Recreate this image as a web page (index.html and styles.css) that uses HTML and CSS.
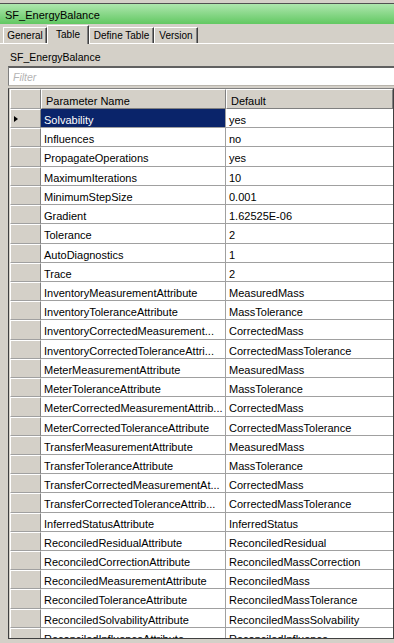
FILE: index.html
```html
<!DOCTYPE html>
<html lang="en">
<head>
    <meta charset="UTF-8">
    <meta name="viewport" content="width=device-width, initial-scale=1.0">
    <title>SF_EnergyBalance</title>
    <link rel="stylesheet" href="styles.css">
</head>
<body>
    <div class="window">
        <div class="titlebar">SF_EnergyBalance</div>

        <div class="tabs">
            <div class="tab tab-general">General</div>
            <div class="tab tab-table active">Table</div>
            <div class="tab tab-define">Define Table</div>
            <div class="tab tab-version">Version</div>
        </div>

        <div class="panel">
            <div class="caption">SF_EnergyBalance</div>
            <div class="filter"><span class="placeholder">Filter</span></div>

            <div class="grid">
                <div class="row head">
                    <div class="rh"></div>
                    <div class="c1">Parameter Name</div>
                    <div class="c2">Default</div>
                </div>
                <div class="row current">
                    <div class="rh"><span class="arrow"></span></div>
                    <div class="c1 selected">Solvability</div>
                    <div class="c2">yes</div>
                </div>
                <div class="row"><div class="rh"></div><div class="c1">Influences</div><div class="c2">no</div></div>
                <div class="row"><div class="rh"></div><div class="c1">PropagateOperations</div><div class="c2">yes</div></div>
                <div class="row"><div class="rh"></div><div class="c1">MaximumIterations</div><div class="c2">10</div></div>
                <div class="row"><div class="rh"></div><div class="c1">MinimumStepSize</div><div class="c2">0.001</div></div>
                <div class="row"><div class="rh"></div><div class="c1">Gradient</div><div class="c2">1.62525E-06</div></div>
                <div class="row"><div class="rh"></div><div class="c1">Tolerance</div><div class="c2">2</div></div>
                <div class="row"><div class="rh"></div><div class="c1">AutoDiagnostics</div><div class="c2">1</div></div>
                <div class="row"><div class="rh"></div><div class="c1">Trace</div><div class="c2">2</div></div>
                <div class="row"><div class="rh"></div><div class="c1">InventoryMeasurementAttribute</div><div class="c2">MeasuredMass</div></div>
                <div class="row"><div class="rh"></div><div class="c1">InventoryToleranceAttribute</div><div class="c2">MassTolerance</div></div>
                <div class="row"><div class="rh"></div><div class="c1">InventoryCorrectedMeasurement...</div><div class="c2">CorrectedMass</div></div>
                <div class="row"><div class="rh"></div><div class="c1">InventoryCorrectedToleranceAttri...</div><div class="c2">CorrectedMassTolerance</div></div>
                <div class="row"><div class="rh"></div><div class="c1">MeterMeasurementAttribute</div><div class="c2">MeasuredMass</div></div>
                <div class="row"><div class="rh"></div><div class="c1">MeterToleranceAttribute</div><div class="c2">MassTolerance</div></div>
                <div class="row"><div class="rh"></div><div class="c1">MeterCorrectedMeasurementAttrib...</div><div class="c2">CorrectedMass</div></div>
                <div class="row"><div class="rh"></div><div class="c1">MeterCorrectedToleranceAttribute</div><div class="c2">CorrectedMassTolerance</div></div>
                <div class="row"><div class="rh"></div><div class="c1">TransferMeasurementAttribute</div><div class="c2">MeasuredMass</div></div>
                <div class="row"><div class="rh"></div><div class="c1">TransferToleranceAttribute</div><div class="c2">MassTolerance</div></div>
                <div class="row"><div class="rh"></div><div class="c1">TransferCorrectedMeasurementAt...</div><div class="c2">CorrectedMass</div></div>
                <div class="row"><div class="rh"></div><div class="c1">TransferCorrectedToleranceAttrib...</div><div class="c2">CorrectedMassTolerance</div></div>
                <div class="row"><div class="rh"></div><div class="c1">InferredStatusAttribute</div><div class="c2">InferredStatus</div></div>
                <div class="row"><div class="rh"></div><div class="c1">ReconciledResidualAttribute</div><div class="c2">ReconciledResidual</div></div>
                <div class="row"><div class="rh"></div><div class="c1">ReconciledCorrectionAttribute</div><div class="c2">ReconciledMassCorrection</div></div>
                <div class="row"><div class="rh"></div><div class="c1">ReconciledMeasurementAttribute</div><div class="c2">ReconciledMass</div></div>
                <div class="row"><div class="rh"></div><div class="c1">ReconciledToleranceAttribute</div><div class="c2">ReconciledMassTolerance</div></div>
                <div class="row"><div class="rh"></div><div class="c1">ReconciledSolvabilityAttribute</div><div class="c2">ReconciledMassSolvability</div></div>
                <div class="row"><div class="rh"></div><div class="c1">ReconciledInfluenceAttribute</div><div class="c2">ReconciledInfluence</div></div>
            </div>
        </div>
    </div>
</body>
</html>
```

FILE: styles.css
```css
body {
    margin: 0;
    background-color: #d4d0c8;
    font-family: "Liberation Sans", Arial, sans-serif;
    font-size: 11px;
    color: black;
}
.window {
    height: 643px;
    overflow: hidden;
}
.titlebar {
    margin-top: 3px;
    height: 20px;
    line-height: 22px;
    padding-left: 5px;
    border-top: 1px solid #505050;
    background: linear-gradient(#aee6ae, #62c862);
    font-size: 11px;
}
.tabs {
    display: flex;
    align-items: flex-end;
    height: 18px;
    margin-top: 1px;
    padding-left: 3px;
    border-bottom: 1px solid white;
}
.tab {
    height: 15px;
    line-height: 16px;
    text-align: center;
    font-size: 10px;
    border-top: 1px solid white;
    border-left: 1px solid white;
    border-right: 1px solid #404040;
    box-shadow: inset -1px 0 0 #808080;
    box-sizing: content-box;
}
.tab-general { width: 42px; }
.tab-table { width: 40px; }
.tab-define { width: 63px; }
.tab-version { width: 42px; }
.tab.active {
    height: 18px;
    line-height: 17px;
    margin-bottom: -1px;
    background-color: #d4d0c8;
    position: relative;
}
.panel {
    padding-left: 8px;
}
.caption {
    height: 22px;
    line-height: 27px;
    padding-left: 2px;
    font-size: 10.5px;
}
.filter {
    height: 17px;
    background-color: white;
    border-top: 2px solid #606060;
    border-left: 1px solid #808080;
    border-bottom: 1px solid #b8b4ac;
    padding-left: 4px;
    line-height: 19px;
}
.placeholder {
    color: #b4b4b4;
    font-style: italic;
    font-size: 10.5px;
}
.grid {
    margin-top: 2px;
    border-top: 1px solid #808080;
    border-left: 1px solid #404040;
    border-right: 1px solid #404040;
    border-bottom: 1px solid #404040;
    height: 549px;
    overflow: hidden;
    padding-left: 1px;
    background-color: white;
    box-shadow: inset 1px 0 0 #d4d0c8;
}
.row {
    display: flex;
    height: 19.23px;
    line-height: 22px;
}
.row.head {
    height: 20px;
    line-height: 23px;
}
.rh {
    width: 29px;
    flex: none;
    background-color: #d4d0c8;
    border-top: 1px solid white;
    border-left: 1px solid white;
    border-right: 1px solid #808080;
    border-bottom: 1px solid #a0a0a0;
    position: relative;
    box-sizing: content-box;
    height: calc(100% - 2px);
}
.c1, .c2 {
    white-space: nowrap;
    overflow: hidden;
    padding-left: 3px;
    border-right: 1px solid #a0a0a0;
    border-bottom: 1px solid #a0a0a0;
}
.c1 {
    width: 181px;
    flex: none;
}
.c2 {
    flex: 1;
    border-right: none;
}
.head .c1, .head .c2 {
    background-color: #d4d0c8;
    border-top: 1px solid white;
    border-left: 1px solid white;
    border-right: 1px solid #808080;
    border-bottom: 1px solid #808080;
    padding-left: 4px;
}
.head .c1 {
    width: 179px;
}
.selected {
    background-color: #0a246a;
    color: white;
}
.arrow {
    position: absolute;
    left: 3px;
    top: 6px;
    border-top: 3.5px solid transparent;
    border-bottom: 3.5px solid transparent;
    border-left: 4px solid black;
}
```
